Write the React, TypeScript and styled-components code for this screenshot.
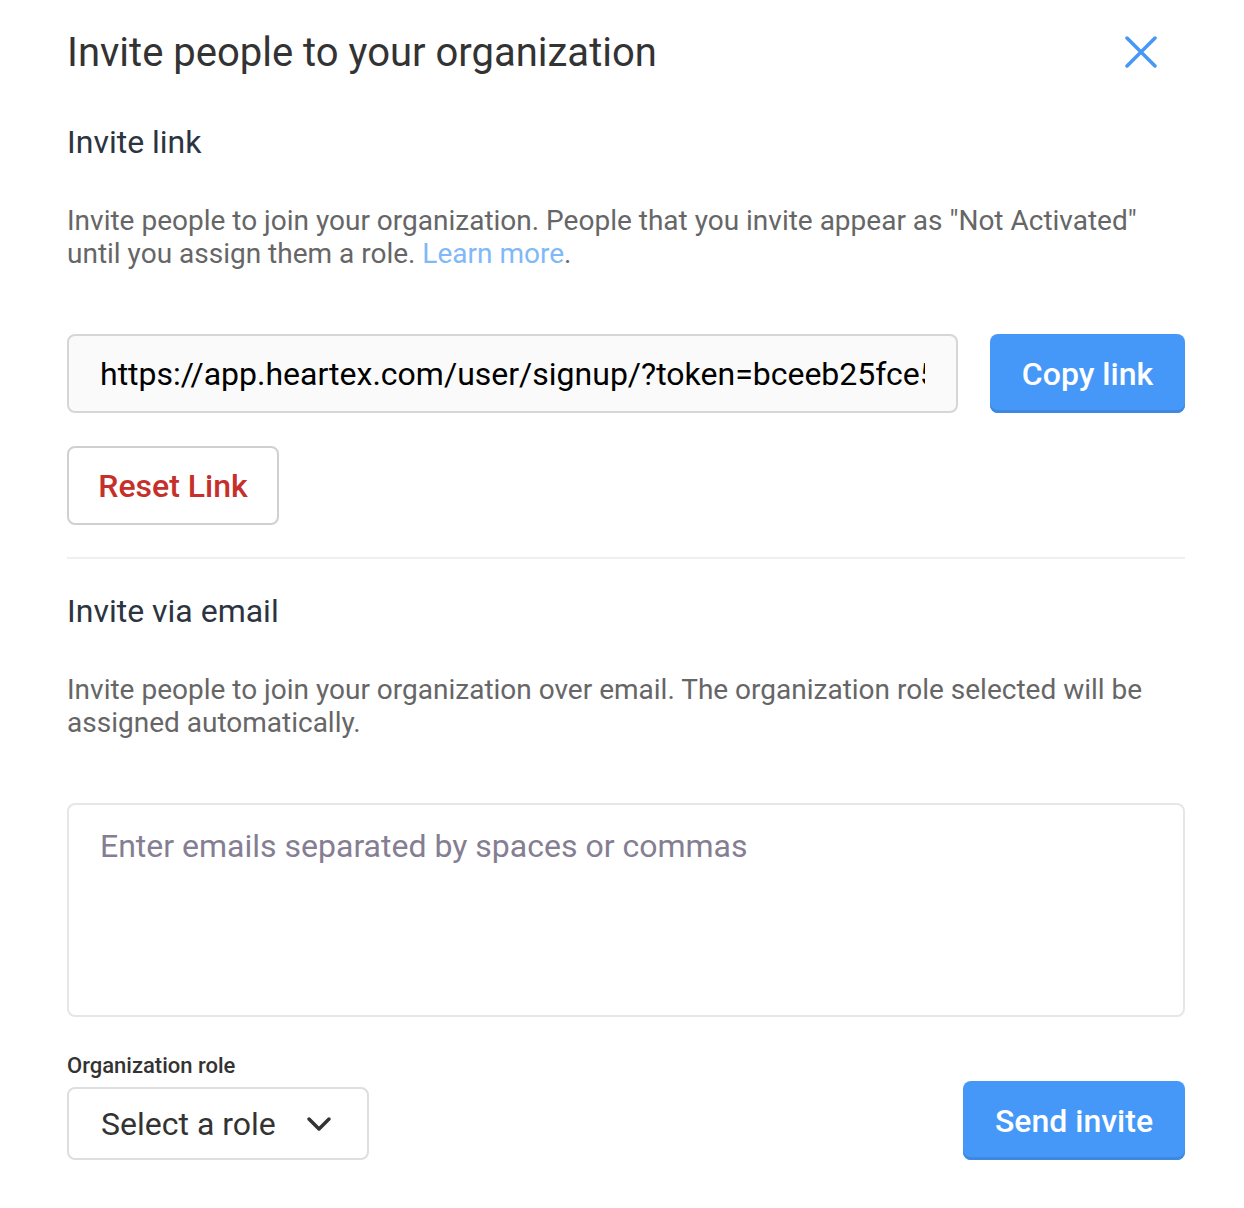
import styled, { createGlobalStyle } from "styled-components";

const GlobalStyle = createGlobalStyle`
    html, body {
        margin: 0;
        padding: 0;
        background: #fff;
        font-family: Roboto, "Liberation Sans", sans-serif;
    }
`;

const Modal = styled.div`
    width: 1244px;
    box-sizing: border-box;
    padding: 24px 59px 40px 67px;
`;

const Header = styled.div`
    display: flex;
    align-items: center;
    justify-content: space-between;
    height: 56px;
`;

const Title = styled.h1`
    margin: 0;
    font-size: 40px;
    font-weight: 400;
    color: #333;
`;

const CloseButton = styled.button`
    border: none;
    background: none;
    padding: 0;
    margin-right: 28px;
    display: flex;
    cursor: pointer;
`;

const SectionTitle = styled.h2`
    margin: 0;
    font-size: 32px;
    font-weight: 400;
    color: #2b3440;
    line-height: 40px;
`;

const Text = styled.p`
    margin: 0;
    font-size: 28px;
    line-height: 33px;
    color: #666;

    a {
        color: #80b8f8;
        text-decoration: none;
    }
`;

const Section = styled.section`
    display: flex;
    flex-direction: column;
`;

const LinkRow = styled.div`
    display: flex;
    gap: 32px;
`;

const LinkInput = styled.input`
    flex: 1;
    min-width: 0;
    height: 79px;
    box-sizing: border-box;
    border: 2px solid #d6d6d6;
    border-radius: 8px;
    background: #fafafa;
    padding: 0 31px;
    font-family: Roboto, "Liberation Sans", sans-serif;
    font-size: 32px;
    color: #000;
    outline: none;
`;

const Button = styled.button<{ $variant?: "primary" | "danger" }>`
    box-sizing: border-box;
    height: 79px;
    padding: 0 20px;
    border-radius: 8px;
    font-family: Roboto, "Liberation Sans", sans-serif;
    font-size: 32px;
    font-weight: 500;
    white-space: nowrap;
    cursor: pointer;
    ${({ $variant }) =>
        $variant === "danger"
            ? `
        background: #fff;
        color: #c5302b;
        border: 2px solid #d0d0d0;
    `
            : `
        background: #4598f8;
        color: #fff;
        border: none;
        box-shadow: inset 0 -3px 0 #3f88e0;
    `}
`;

const Divider = styled.hr`
    border: none;
    border-top: 2px solid #efefef;
    margin: 32px 0 32px;
`;

const EmailArea = styled.textarea`
    height: 214px;
    box-sizing: border-box;
    border: 2px solid #e6e6e6;
    border-radius: 8px;
    padding: 21px 31px;
    font-family: Roboto, "Liberation Sans", sans-serif;
    font-size: 32px;
    line-height: 40px;
    resize: none;
    outline: none;
    color: #333;

    &::placeholder {
        color: #857e93;
    }
`;

const Footer = styled.div`
    display: flex;
    align-items: flex-end;
    justify-content: space-between;
    margin-top: 36px;
`;

const Field = styled.div`
    display: flex;
    flex-direction: column;
    gap: 8px;
`;

const Label = styled.label`
    font-size: 22px;
    font-weight: 500;
    color: #333;
    line-height: 26px;
`;

const Select = styled.div`
    width: 302px;
    height: 73px;
    box-sizing: border-box;
    border: 2px solid #dedede;
    border-radius: 8px;
    display: flex;
    align-items: center;
    justify-content: space-between;
    padding: 0 35px 0 32px;
    font-size: 32px;
    color: #333;
`;

export default function App() {
    return (
        <Modal>
            <GlobalStyle />
            <Header>
                <Title>Invite people to your organization</Title>
                <CloseButton aria-label="Close">
                    <svg width="32" height="32" viewBox="0 0 32 32">
                        <path d="M2 2L30 30M30 2L2 30" stroke="#4697f6" strokeWidth="3.5" strokeLinecap="round" />
                    </svg>
                </CloseButton>
            </Header>

            <Section>
                <SectionTitle style={{ marginTop: 42 }}>Invite link</SectionTitle>
                <Text style={{ marginTop: 42 }}>
                    Invite people to join your organization. People that you invite appear as "Not Activated" until you
                    assign them a role. <a href="#">Learn more</a>.
                </Text>
                <LinkRow style={{ marginTop: 64 }}>
                    <LinkInput readOnly value="https://app.heartex.com/user/signup/?token=bceeb25fce5a1d7e8f0" />
                    <Button $variant="primary" style={{ width: 195 }}>Copy link</Button>
                </LinkRow>
                <div style={{ marginTop: 33 }}>
                    <Button $variant="danger" style={{ width: 212 }}>Reset Link</Button>
                </div>
            </Section>

            <Divider />

            <Section>
                <SectionTitle>Invite via email</SectionTitle>
                <Text style={{ marginTop: 42 }}>
                    Invite people to join your organization over email. The organization role selected will be assigned
                    automatically.
                </Text>
                <EmailArea style={{ marginTop: 64 }} placeholder="Enter emails separated by spaces or commas" />
            </Section>

            <Footer>
                <Field>
                    <Label>Organization role</Label>
                    <Select>
                        <span>Select a role</span>
                        <svg width="26" height="16" viewBox="0 0 26 16">
                            <path d="M3 3L13 13L23 3" stroke="#333" strokeWidth="3.5" fill="none" strokeLinecap="round" strokeLinejoin="round" />
                        </svg>
                    </Select>
                </Field>
                <Button $variant="primary" style={{ width: 222 }}>Send invite</Button>
            </Footer>
        </Modal>
    );
}
